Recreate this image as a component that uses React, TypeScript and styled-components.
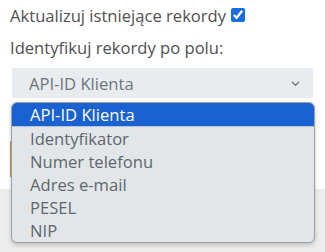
import React from "react";
import styled, { createGlobalStyle } from "styled-components";

const GlobalStyle = createGlobalStyle`
  html, body {
    margin: 0;
    padding: 0;
    background: #ffffff;
    font-family: "Open Sans", "Noto Sans", sans-serif;
  }
`;

const Page = styled.div`
  position: relative;
  width: 325px;
  height: 252px;
  overflow: hidden;
  display: flex;
  flex-direction: column;
`;

const Form = styled.div`
  display: flex;
  flex-direction: column;
  padding: 4px 12px 0 10px;
`;

const Label = styled.label`
  display: flex;
  align-items: center;
  gap: 5px;
  height: 22px;
  margin-bottom: 10px;
  font-size: 16.6px;
  color: #505050;
`;

const Check = styled.input`
  width: 14px;
  height: 14px;
  margin: 0;
  accent-color: #1a6dde;
`;

const SelectBox = styled.div`
  display: flex;
  align-items: center;
  justify-content: space-between;
  height: 30px;
  margin: 0 0 0 2px;
  padding: 0 12px 0 17px;
  background: #e9ecef;
  font-size: 16.6px;
  color: #6c757d;
`;

const Chevron = styled.svg`
  width: 11px;
  height: 11px;
  color: #555;
`;

const Behind = styled.div`
  display: flex;
  flex-direction: column;
  flex: 1;
  margin-top: 43px;
`;

const Alert = styled.div`
  height: 36px;
  margin-left: 10px;
  border-left: 2px solid #c8913f;
`;

const Footer = styled.div`
  flex: 1;
  margin-top: 12px;
  background: #ececec;
`;

const Popup = styled.ul`
  position: absolute;
  left: 11px;
  top: 102px;
  width: 302px;
  margin: 0;
  padding: 0;
  list-style: none;
  background: #e3e6e8;
  border: 1px solid #9aa0a4;
  border-radius: 6px;
  box-shadow: 0 2px 4px rgba(0, 0, 0, 0.2);
  overflow: hidden;
`;

const Option = styled.li<{ $active?: boolean }>`
  height: 23px;
  line-height: 23px;
  padding-left: 18px;
  font-size: 16.6px;
  color: ${(p) => (p.$active ? "#ffffff" : "#5e666d")};
  background: ${(p) => (p.$active ? "#1a62d2" : "transparent")};
  border-bottom: ${(p) => (p.$active ? "1px solid #b8c4d2" : "none")};
`;

const options = [
  "API-ID Klienta",
  "Identyfikator",
  "Numer telefonu",
  "Adres e-mail",
  "PESEL",
  "NIP",
];

export default function App() {
  return (
    <>
      <GlobalStyle />
      <Page>
        <Form>
          <Label>
            Aktualizuj istniejące rekordy
            <Check type="checkbox" defaultChecked />
          </Label>
          <Label>Identyfikuj rekordy po polu:</Label>
          <SelectBox>
            API-ID Klienta
            <Chevron viewBox="0 0 24 24" fill="none" stroke="currentColor" strokeWidth="2.2" strokeLinecap="round" strokeLinejoin="round">
              <path d="M5 9l7 7 7-7" />
            </Chevron>
          </SelectBox>
        </Form>
        <Behind>
          <Alert />
          <Footer />
        </Behind>
        <Popup>
          {options.map((o, i) => (
            <Option key={o} $active={i === 0}>
              {o}
            </Option>
          ))}
        </Popup>
      </Page>
    </>
  );
}
